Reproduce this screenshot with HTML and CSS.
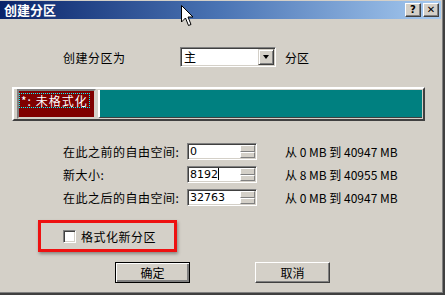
FILE: index.html
```html
<!DOCTYPE html>
<html>
	<head>
		<meta charset="utf-8">
		<title>创建分区</title>
		<link rel="stylesheet" href="styles.css">
	</head>
	<body>
		<div class="window">
			<div class="titlebar">
				<span class="title">创建分区</span>
				<div class="tbtns">
					<span class="tbtn">?</span>
					<span class="tbtn">&#x2715;</span>
				</div>
			</div>
			<div class="content">
				<div class="type-row">
					<span class="type-label">创建分区为</span>
					<div class="select">
						<span class="select-val">主</span>
						<span class="select-btn"><i class="tri"></i></span>
					</div>
					<span class="type-after">分区</span>
				</div>

				<div class="partbar">
					<div class="part-free"><span class="focus">*: 未格式化</span></div>
					<div class="part-rest"></div>
				</div>

				<div class="sizes">
					<span class="s-label">在此之前的自由空间:</span>
					<div class="spin"><span class="spin-val">0</span><span class="spin-btn"><i></i><i></i></span></div>
					<span class="s-range">从 0 MB 到 40947 MB</span>

					<span class="s-label">新大小:</span>
					<div class="spin"><span class="spin-val">8192<b class="caret"></b></span><span class="spin-btn"><i></i><i></i></span></div>
					<span class="s-range">从 8 MB 到 40955 MB</span>

					<span class="s-label">在此之后的自由空间:</span>
					<div class="spin"><span class="spin-val">32763</span><span class="spin-btn"><i></i><i></i></span></div>
					<span class="s-range">从 0 MB 到 40947 MB</span>
				</div>

				<div class="format-box">
					<span class="check"></span>
					<span class="check-label">格式化新分区</span>
				</div>

				<div class="buttons">
					<button class="btn btn-default">确定</button>
					<button class="btn">取消</button>
				</div>
			</div>

			<!-- mouse pointer sitting over the title bar -->
			<svg class="pointer" width="13" height="22" viewBox="0 0 13 22">
				<path d="M0.5 0.5 L0.5 17 L4.5 13 L7.5 20.5 L10 19.5 L7 12 L12 12 Z" fill="#fff" stroke="#000" stroke-width="1"/>
			</svg>
		</div>
	</body>
</html>
```

FILE: styles.css
```css
html, body {
	margin: 0;
	padding: 0;
}

body {
	font-family: "Noto Sans CJK SC", "DejaVu Sans", sans-serif;
	font-size: 12px;
	color: #000;
	background: #d4d0c8;
}

.window {
	position: relative;
	width: 445px;
	height: 295px;
	box-sizing: border-box;
	padding-top: 1px;
	background: #d4d0c8;
	border-right: 2px solid #404040;
	border-bottom: 2px solid #404040;
	box-shadow: inset -1px -1px 0 #808080;
	overflow: hidden;
}

.titlebar {
	display: flex;
	align-items: center;
	justify-content: space-between;
	height: 18px;
	margin-right: 2px;
	padding-left: 4px;
	background: linear-gradient(to right, #0a246a, #4a74b4 50%, #a6caf0);
}

.title {
	color: #fff;
	font-weight: bold;
	font-size: 13px;
	line-height: 18px;
}

.tbtns {
	display: flex;
	gap: 2px;
	margin-right: 2px;
}

.tbtn {
	width: 16px;
	height: 14px;
	box-sizing: border-box;
	background: #d4d0c8;
	border: 1px solid;
	border-color: #fff #404040 #404040 #fff;
	box-shadow: inset -1px -1px 0 #808080;
	font-family: "DejaVu Sans", sans-serif;
	font-weight: bold;
	font-size: 10px;
	line-height: 12px;
	text-align: center;
}

.content {
	padding-left: 12px;
}

/* partition type */
.type-row {
	display: flex;
	align-items: center;
	margin-top: 28px;
	padding-left: 51px;
	height: 20px;
}

.type-label {
	width: 117px;
	letter-spacing: 0.5px;
}

.select {
	display: flex;
	align-items: center;
	width: 96px;
	height: 20px;
	box-sizing: border-box;
	background: #fff;
	border: 1px solid;
	border-color: #808080 #fff #fff #808080;
	box-shadow: inset 1px 1px 0 #404040, inset -1px -1px 0 #d4d0c8;
}

.select-val {
	flex: 1;
	padding-left: 3px;
	line-height: 16px;
}

.select-btn {
	display: flex;
	align-items: center;
	justify-content: center;
	width: 16px;
	height: 16px;
	margin-right: 1px;
	box-sizing: border-box;
	background: #d4d0c8;
	border: 1px solid;
	border-color: #d4d0c8 #404040 #404040 #d4d0c8;
	box-shadow: inset 1px 1px 0 #fff, inset -1px -1px 0 #808080;
}

.tri {
	width: 0;
	height: 0;
	border-left: 3.5px solid transparent;
	border-right: 3.5px solid transparent;
	border-top: 4px solid #000;
}

.type-after {
	margin-left: 9px;
}

/* partition bar */
.partbar {
	display: flex;
	align-items: flex-start;
	gap: 2px;
	width: 413px;
	height: 34px;
	margin-top: 20px;
	padding-left: 3px;
	box-sizing: border-box;
	border: 2px solid;
	border-color: #fff #404040 #404040 #fff;
}

.part-free {
	width: 79px;
	height: 30px;
	box-sizing: border-box;
	padding: 1px;
	background: #800000;
	border: 2px solid;
	border-color: #808080 #d4d0c8 #d4d0c8 #808080;
}

.focus {
	display: inline-block;
	color: #fff;
	line-height: 13px;
	padding: 0 1px;
	letter-spacing: 1px;
	outline: 1px dotted #0ff;
}

.part-rest {
	flex: 1;
	height: 28px;
	margin-top: 1px;
	margin-right: 1px;
	background: #008080;
	border-left: 2px solid #fff;
	border-bottom: 1px solid #404040;
	box-sizing: border-box;
}

/* sizes */
.sizes {
	display: grid;
	grid-template-columns: 124px 70px auto;
	row-gap: 6px;
	align-items: center;
	margin-top: 22px;
	padding-left: 51px;
}

.s-label {
	letter-spacing: 0.5px;
}

.spin {
	display: flex;
	height: 17px;
	box-sizing: border-box;
	background: #fff;
	border: 1px solid;
	border-color: #808080 #fff #fff #808080;
	box-shadow: inset 1px 1px 0 #404040, inset -1px -1px 0 #d4d0c8;
}

.spin-val {
	flex: 1;
	padding-left: 2px;
	line-height: 15px;
	font-family: "DejaVu Sans", sans-serif;
	font-size: 11px;
}

.caret {
	display: inline-block;
	width: 1px;
	height: 12px;
	background: #000;
	vertical-align: -2px;
}

.spin-btn {
	display: flex;
	flex-direction: column;
	width: 15px;
	margin: 1px 1px 1px 0;
}

.spin-btn i {
	flex: 1;
	background: #d4d0c8;
	border: 1px solid;
	border-color: #fff #808080 #808080 #fff;
}

.s-range {
	margin-left: 28px;
}

/* format option, outlined in red */
.format-box {
	display: flex;
	align-items: center;
	gap: 5px;
	width: 139px;
	height: 32px;
	box-sizing: border-box;
	margin-top: 14px;
	margin-left: 26px;
	padding-left: 22px;
	border: 3px solid #ee1111;
	box-shadow: 1px 2px 3px rgba(0, 0, 0, 0.35);
}

.check {
	width: 13px;
	height: 13px;
	box-sizing: border-box;
	background: #fff;
	border: 1px solid;
	border-color: #808080 #fff #fff #808080;
	box-shadow: inset 1px 1px 0 #404040, inset -1px -1px 0 #d4d0c8;
}

.check-label {
	letter-spacing: 0.5px;
}

/* dialog buttons */
.buttons {
	display: flex;
	gap: 65px;
	margin-top: 10px;
	padding-left: 103px;
}

.btn {
	width: 75px;
	height: 21px;
	padding: 0;
	font-family: "Noto Sans CJK SC", sans-serif;
	font-size: 12px;
	color: #000;
	background: #d4d0c8;
	border: 1px solid;
	border-color: #fff #404040 #404040 #fff;
	box-shadow: inset -1px -1px 0 #808080;
}

.btn-default {
	border: 1px solid #000;
	box-shadow: inset 1px 1px 0 #fff, inset -2px -2px 0 #808080;
}

.pointer {
	position: absolute;
	left: 181px;
	top: 5px;
}
```
